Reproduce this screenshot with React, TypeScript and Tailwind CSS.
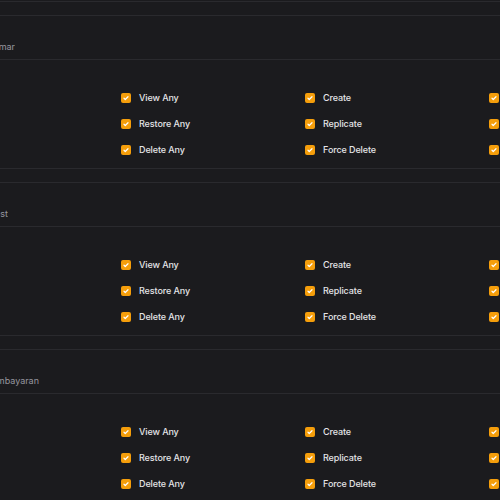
import React from 'react';

const permissions = [
  ['View Any', 'Create', 'Update'],
  ['Restore Any', 'Replicate', 'Reorder'],
  ['Delete Any', 'Force Delete', 'Force Delete Any'],
];

const resources = [
  { model: 'App\\Models\\Kamar', clip: 'w-[15px]' },
  { model: 'App\\Models\\Guest', clip: 'w-[8px]' },
  { model: 'App\\Models\\Pembayaran', clip: 'w-[39px]' },
];

const Check = () => (
  <span className="flex h-[10px] w-[10px] shrink-0 items-center justify-center rounded-[2px] bg-[#f59e0b]">
    <svg viewBox="0 0 16 16" className="h-[8px] w-[8px]" fill="none" stroke="white" strokeWidth="2.4" strokeLinecap="round" strokeLinejoin="round">
      <path d="M4 8.5l2.5 2.5L12 5.5" />
    </svg>
  </span>
);

const Section = ({ model, clip }: { model: string; clip: string }) => (
  <div className="border-y border-[#2a2a2e]">
    <div className="h-[44px] border-b border-[#2a2a2e] pt-[24px]">
      <div className={`flex ${clip} justify-end overflow-hidden whitespace-nowrap text-[9px] leading-[14px] text-[#96969e]`}>
        {model}
      </div>
    </div>
    <div className="h-[108px] pl-[121px] pt-[33px]">
      <div className="grid w-[552px] grid-cols-[repeat(3,184px)] gap-y-[15.75px]">
        {permissions.flat().map((p) => (
          <div key={p} className="flex h-[10px] items-center gap-[8px]">
            <Check />
            <span className="whitespace-nowrap text-[9px] font-medium leading-[10px] tracking-[-0.1px] text-[#e4e4e7]">{p}</span>
          </div>
        ))}
      </div>
    </div>
  </div>
);

export default function App() {
  return (
    <div className="h-[500px] w-[500px] overflow-hidden bg-[#1b1b1e] font-['Inter',sans-serif]">
      <div className="h-[2px] border-b border-[#2a2a2e]" />
      <div className="mt-[13px] flex flex-col gap-[13px]">
        {resources.map((r) => (
          <Section key={r.model} model={r.model} clip={r.clip} />
        ))}
      </div>
    </div>
  );
}
